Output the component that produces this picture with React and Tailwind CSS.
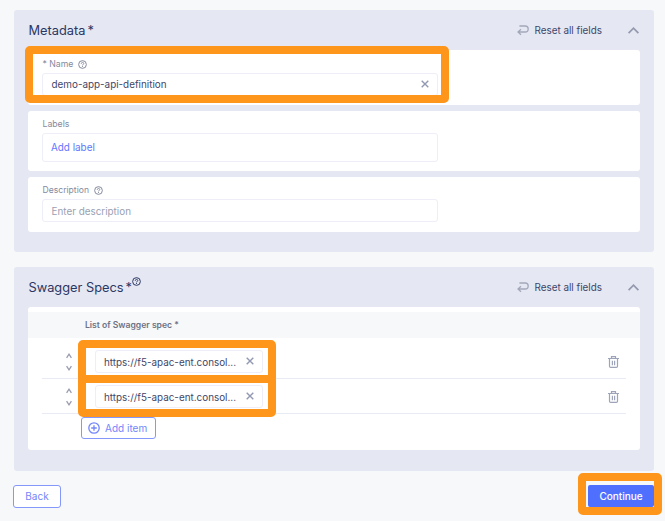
import React from 'react';

function HelpIcon({ className = 'text-[#858a9d]' }) {
  return (
    <svg viewBox="0 0 10 10" className={`h-[9px] w-[9px] shrink-0 ${className}`} fill="none" stroke="currentColor">
      <circle cx="5" cy="5" r="4.3" strokeWidth="1.1" />
      <path d="M3.6 4.1C3.6 2.2 6.4 2.2 6.4 3.9C6.4 4.9 5 4.8 5 6" strokeWidth="1.1" />
      <path d="M5 6.7V7.7" strokeWidth="1.1" />
    </svg>
  );
}

function CloseIcon({ className = '' }) {
  return (
    <svg viewBox="0 0 8 8" className={`-mt-px h-2 w-2 shrink-0 text-[#9299b2] ${className}`} fill="none" stroke="currentColor" strokeWidth="1.4">
      <path d="M0.7 0.7L7.3 7.3M7.3 0.7L0.7 7.3" />
    </svg>
  );
}

function TrashIcon() {
  return (
    <svg viewBox="0 0 11 12" className="h-3 w-[11px] shrink-0 text-[#9da3b8]" fill="none" stroke="currentColor" strokeWidth="1.2">
      <path d="M0 2.5H11M3.5 2.5V0.7H7.5V2.5M1.5 2.5V10.2Q1.5 11.4 2.7 11.4H8.3Q9.5 11.4 9.5 10.2V2.5M4.4 4.7V9.2M6.6 4.7V9.2" />
    </svg>
  );
}

function PanelHeader({ title, help }) {
  return (
    <div className="flex h-10 items-center pl-[14.5px] pr-[15px]">
      <h2 className="flex pt-[2px] text-[12.8px] leading-5 text-[#2b3763]">
        <span>{title}</span>
        <span className="ml-[2px]">*</span>
        {help && <HelpIcon className="-mt-px text-[#2b3763]" />}
      </h2>
      <button className="ml-auto flex items-center text-[9.9px] text-[#3d4668]">
        <svg viewBox="0 0 12 11" className="mr-[5px] mt-px h-[11px] w-3 text-[#a3a8ba]" fill="none" stroke="currentColor" strokeWidth="1.3">
          <path d="M2.4 1H8.2Q11.2 1 11.2 4T8.2 7H1M4 4.2L1 7L4 9.8" />
        </svg>
        <span>Reset all fields</span>
      </button>
      <svg viewBox="0 0 11 7" className="ml-[26px] h-[7px] w-[11px] text-[#9499ad]" fill="none" stroke="currentColor" strokeWidth="1.7">
        <path d="M0.6 6.2L5.5 1.2L10.4 6.2" />
      </svg>
    </div>
  );
}

function Highlight({ className }) {
  return <div className={`pointer-events-none absolute z-10 border-8 border-[#ff961c] ${className}`} />;
}

function SpecRow({ className = '' }) {
  return (
    <div className={`mx-[14px] flex items-center border-b border-[#e9ebf4] ${className}`}>
      <svg viewBox="0 0 6 18" className="ml-[24px] mt-[2px] h-[18px] w-[6px] text-[#989cae]" fill="none" stroke="currentColor" strokeWidth="1.3">
        <path d="M0.6 4.8L3 1.2L5.4 4.8M0.6 13.2L3 16.8L5.4 13.2" />
      </svg>
      <div className="ml-[23px] flex h-[23px] w-[168px] items-center justify-between rounded-[3px] border border-[#edeef7] px-2 pt-px text-[9.9px] text-[#3f4668]">
        <span className="pt-px">https://f5-apac-ent.consol...</span>
        <CloseIcon />
      </div>
      <div className="ml-auto mr-[7px] mt-px">
        <TrashIcon />
      </div>
    </div>
  );
}

export default function App() {
  return (
    <div className="h-[521px] w-[665px] overflow-hidden bg-[#f7f8fa] pl-[14px] pr-[11px] pt-[10px] font-['Inter','Liberation_Sans',sans-serif]">
      <section className="h-[242px] rounded-[3px] bg-[#e5e7f3]">
        <PanelHeader title="Metadata" />
        <div className="mx-[14px] flex flex-col gap-1.5">
          <div className="relative h-[55px] rounded-[3px] bg-white px-[14px] pt-[7px]">
            <label className="flex h-4 items-center gap-[5px] pl-[0.5px] text-[8.7px] text-[#858a9d]">
              <span>* Name</span>
              <HelpIcon className="-mt-[2px] text-[#858a9d]" />
            </label>
            <div className="flex h-[23px] w-[396px] items-center justify-between rounded-[3px] border border-[#edeef7] pl-[8.5px] pr-2 text-[9.9px] text-[#3f4668]">
              <span>demo-app-api-definition</span>
              <CloseIcon />
            </div>
            <Highlight className="-left-[3px] -top-1 h-[57px] w-[424px] rounded-[5px]" />
          </div>
          <div className="h-[60px] rounded-[3px] bg-white px-[14px] pt-[5px]">
            <label className="flex h-[17px] items-center pl-[0.5px] text-[8.7px] text-[#858a9d]">Labels</label>
            <div className="flex h-[29px] w-[396px] items-center rounded-[3px] border border-[#edeef7] px-2 text-[9.9px] text-[#6076ff]">
              Add label
            </div>
          </div>
          <div className="h-[55px] rounded-[3px] bg-white px-[14px] pt-[5px]">
            <label className="flex h-[17px] items-center gap-[5px] pl-[0.5px] text-[8.6px] text-[#858a9d]">
              <span>Description</span>
              <HelpIcon />
            </label>
            <div className="flex h-[23px] w-[396px] items-center rounded-[3px] border border-[#edeef7] pl-[8.5px] pt-px text-[9.9px] text-[#9a9fb3]">
              Enter description
            </div>
          </div>
        </div>
      </section>

      <section className="mt-[15px] h-[204px] rounded-[3px] bg-[#e5e7f3]">
        <PanelHeader title="Swagger Specs" help />
        <div className="relative mx-[14px] h-[143px] rounded-[3px] bg-white pt-[5px]">
          <div className="flex h-[26px] items-center bg-[#f7f8fa] pl-[57px] pt-px text-[8.6px] font-semibold text-[#6c7285]">
            List of Swagger spec *
          </div>
          <SpecRow className="h-[41px] pt-[6px]" />
          <SpecRow className="h-[35px]" />
          <button className="ml-[53px] mt-[3px] flex h-[22px] w-[75px] items-center rounded-[3px] border border-[#8497fb] pl-[6px] text-[10px] text-[#7486fb]">
            <svg viewBox="0 0 12 12" className="mr-[5px] h-3 w-3" fill="none" stroke="currentColor" strokeWidth="1.3">
              <circle cx="6" cy="6" r="5.2" />
              <path d="M6 3.2V8.8M3.2 6H8.8" />
            </svg>
            <span>Add item</span>
          </button>
          <Highlight className="left-[50px] top-[33px] h-[43px] w-[198px] rounded-[5px]" />
          <Highlight className="left-[50px] top-[68px] h-[42px] w-[198px] rounded-[5px]" />
        </div>
      </section>

      <footer className="mt-[14px] flex items-start justify-between">
        <button className="-ml-px flex h-[23px] w-[48px] items-center justify-center rounded-[3px] border border-[#8497fb] bg-white text-[10px] text-[#7486fb]">
          Back
        </button>
        <div className="relative">
          <button className="flex h-[22px] w-[66px] items-center justify-center rounded-[2px] bg-[#4f70ff] text-[10px] font-medium text-white">
            Continue
          </button>
          <Highlight className="-left-[10px] -top-3 h-[42px] w-[84px] rounded-[5px]" />
        </div>
      </footer>
    </div>
  );
}
